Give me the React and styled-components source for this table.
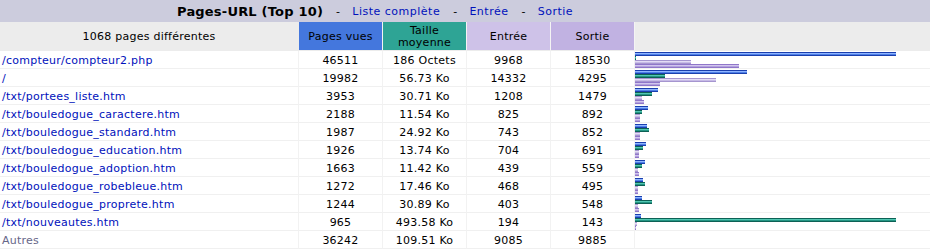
import React from "react";
import styled, { createGlobalStyle } from "styled-components";

const GlobalStyle = createGlobalStyle`
  body {
    margin: 0;
    background: #ffffff;
    font-family: "DejaVu Sans", Verdana, sans-serif;
  }
`;

const rows = [
  { url: "/compteur/compteur2.php", pages: 46511, size: "186 Octets", kb: 0.18, entry: 9968, exit: 18530 },
  { url: "/", pages: 19982, size: "56.73 Ko", kb: 56.73, entry: 14332, exit: 4295 },
  { url: "/txt/portees_liste.htm", pages: 3953, size: "30.71 Ko", kb: 30.71, entry: 1208, exit: 1479 },
  { url: "/txt/bouledogue_caractere.htm", pages: 2188, size: "11.54 Ko", kb: 11.54, entry: 825, exit: 892 },
  { url: "/txt/bouledogue_standard.htm", pages: 1987, size: "24.92 Ko", kb: 24.92, entry: 743, exit: 852 },
  { url: "/txt/bouledogue_education.htm", pages: 1926, size: "13.74 Ko", kb: 13.74, entry: 704, exit: 691 },
  { url: "/txt/bouledogue_adoption.htm", pages: 1663, size: "11.42 Ko", kb: 11.42, entry: 439, exit: 559 },
  { url: "/txt/bouledogue_robebleue.htm", pages: 1272, size: "17.46 Ko", kb: 17.46, entry: 468, exit: 495 },
  { url: "/txt/bouledogue_proprete.htm", pages: 1244, size: "30.89 Ko", kb: 30.89, entry: 403, exit: 548 },
  { url: "/txt/nouveautes.htm", pages: 965, size: "493.58 Ko", kb: 493.58, entry: 194, exit: 143 },
];

const MAX_HITS = 46511;
const MAX_KB = 493.58;
const barWidth = (v, max) => Math.floor((v * 260) / max) + 1;

const barColors = {
  pages: ["#1a3fae", "#8fb4ff", "#4d7fe6"],
  size: ["#0d6155", "#52c7b2", "#249684"],
  entry: ["#a595cf", "#e4dcf5", "#c7bbe6"],
  exit: ["#8f76c9", "#d2c6ee", "#b3a1de"],
};

const Page = styled.div`
  width: 930px;
  font-size: 11px;
  letter-spacing: 0.25px;
  color: #000000;
`;

const TitleBar = styled.div`
  display: flex;
  align-items: center;
  height: 22px;
  padding-left: 177px;
  background: #ccccdd;
  font-size: 11px;
`;

const Title = styled.span`
  font-weight: bold;
  font-size: 13px;
  letter-spacing: 0.2px;
`;

const Dash = styled.span`
  margin: 0 12px 0 13px;
`;

const Link = styled.a`
  color: #0011bb;
  letter-spacing: 0.5px;
  text-decoration: none;
`;

const Row = styled.div`
  display: grid;
  grid-template-columns: 299px 84px 84px 84px 84px 1fr;
  height: ${(p) => (p.$head ? "29px" : "18px")};
`;

const HeadCell = styled.div`
  display: flex;
  align-items: center;
  justify-content: center;
  padding-top: 2px;
  text-align: center;
  line-height: 12px;
  background: ${(p) => p.$bg || "#ececec"};
  border-right: 1px solid ${(p) => (p.$bg ? "#f4f4f4" : "#ececec")};
  border-bottom: 1px solid #ececec;
`;

const Cell = styled.div`
  display: flex;
  align-items: center;
  justify-content: ${(p) => (p.$left ? "flex-start" : "center")};
  padding: 2px 0 0 ${(p) => (p.$left ? "2px" : "0")};
  white-space: nowrap;
  color: ${(p) => p.$color || "#000000"};
  border-right: 1px solid #f2f2f2;
  border-bottom: 1px solid #f0f0f0;
`;

const ChartCell = styled.div`
  display: flex;
  flex-direction: column;
  justify-content: flex-start;
  padding-top: 1px;
  border-bottom: 1px solid #f0f0f0;
`;

const Bar = styled.div`
  height: 4px;
  background: linear-gradient(
    to bottom,
    ${(p) => barColors[p.$kind][0]} 0 25%,
    ${(p) => barColors[p.$kind][1]} 25% 50%,
    ${(p) => barColors[p.$kind][2]} 50% 75%,
    ${(p) => barColors[p.$kind][0]} 75% 100%
  );
`;

export default function App() {
  return (
    <Page>
      <GlobalStyle />
      <TitleBar>
        <Title>Pages-URL (Top 10)</Title>
        <Dash>-</Dash>
        <Link href="#">Liste complète</Link>
        <Dash>-</Dash>
        <Link href="#">Entrée</Link>
        <Dash>-</Dash>
        <Link href="#">Sortie</Link>
      </TitleBar>
      <Row $head>
        <HeadCell>1068 pages différentes</HeadCell>
        <HeadCell $bg="#4477dd">Pages vues</HeadCell>
        <HeadCell $bg="#2ea495">
          Taille
          <br />
          moyenne
        </HeadCell>
        <HeadCell $bg="#cec2e8">Entrée</HeadCell>
        <HeadCell $bg="#c1b2e2">Sortie</HeadCell>
        <HeadCell />
      </Row>
      {rows.map((r) => (
        <Row key={r.url}>
          <Cell $left $color="#0011bb">{r.url}</Cell>
          <Cell>{r.pages}</Cell>
          <Cell>{r.size}</Cell>
          <Cell>{r.entry}</Cell>
          <Cell>{r.exit}</Cell>
          <ChartCell>
            <Bar $kind="pages" style={{ width: barWidth(r.pages, MAX_HITS) }} />
            <Bar $kind="size" style={{ width: barWidth(r.kb, MAX_KB) }} />
            <Bar $kind="entry" style={{ width: barWidth(r.entry, MAX_HITS) }} />
            <Bar $kind="exit" style={{ width: barWidth(r.exit, MAX_HITS) }} />
          </ChartCell>
        </Row>
      ))}
      <Row>
        <Cell $left $color="#666688">Autres</Cell>
        <Cell>36242</Cell>
        <Cell>109.51 Ko</Cell>
        <Cell>9085</Cell>
        <Cell>9885</Cell>
        <ChartCell />
      </Row>
    </Page>
  );
}
